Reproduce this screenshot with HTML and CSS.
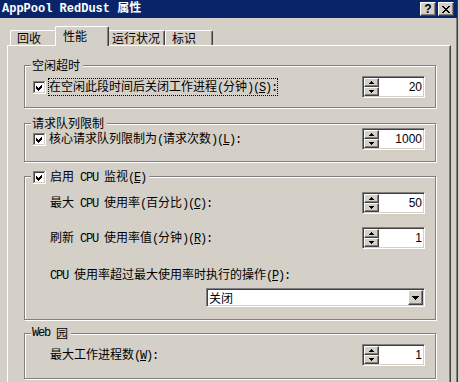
FILE: index.html
```html
<!DOCTYPE html>
<html>
<head>
<meta charset="utf-8">
<link rel="stylesheet" href="styles.css">
</head>
<body>
<div class="win">
  <div class="title">
    <span class="title-text">AppPool RedDust 属性</span>
    <div class="tbtns">
      <span class="tbtn help">?</span>
      <span class="tbtn"><svg width="8" height="7" viewBox="0 0 8 7" shape-rendering="crispEdges"><path d="M0 0h2v1h1v1h2V1h1V0h2v1H7v1H6v1H5v1h1v1h1v1h1v1H6V6H5V5H3v1H2v1H0V6h1V5h1V4h1V3H2V2H1V1H0z" fill="#000"/></svg></span>
    </div>
  </div>
  <div class="tabs">
    <div class="tab t1">回收</div>
    <div class="tab sel">性能</div>
    <div class="tab t3">运行状况</div>
    <div class="tab t4">标识</div>
  </div>
  <div class="panel">
    <div class="group g1">
      <div class="legend">空闲超时</div>
      <div class="row">
        <svg class="cb" width="13" height="13" viewBox="0 0 13 13" shape-rendering="crispEdges"><rect x="0" y="0" width="13" height="13" fill="#fff"/><path d="M0 0h12v1H1v11H0z" fill="#808080"/><path d="M1 1h10v1H2v9H1z" fill="#404040"/><path d="M11 1h1v11H1v-1h10z" fill="#d4d0c8"/><path d="M9 3v3L5 10 3 8V5l2 2z" fill="#000"/></svg>
        <span class="lbl focus">在空闲此段时间后关闭工作进程<span class="m">(</span>分钟<span class="m">)(<u>S</u>):</span></span>
        <div class="spin">
          <div class="btns">
            <span class="sb"><svg width="5" height="3" viewBox="0 0 5 3" shape-rendering="crispEdges"><path d="M2 0h1v1h1v1h1v1H0V2h1V1h1z" fill="#000"/></svg></span>
            <span class="sb"><svg width="5" height="3" viewBox="0 0 5 3" shape-rendering="crispEdges"><path d="M0 0h5v1H4v1H3v1H2V2H1V1H0z" fill="#000"/></svg></span>
          </div>
          <span class="val">20</span>
        </div>
      </div>
    </div>

    <div class="group g2">
      <div class="legend">请求队列限制</div>
      <div class="row">
        <svg class="cb" width="13" height="13" viewBox="0 0 13 13" shape-rendering="crispEdges"><rect x="0" y="0" width="13" height="13" fill="#fff"/><path d="M0 0h12v1H1v11H0z" fill="#808080"/><path d="M1 1h10v1H2v9H1z" fill="#404040"/><path d="M11 1h1v11H1v-1h10z" fill="#d4d0c8"/><path d="M9 3v3L5 10 3 8V5l2 2z" fill="#000"/></svg>
        <span class="lbl">核心请求队列限制为<span class="m">(</span>请求次数<span class="m">)(<u>L</u>):</span></span>
        <div class="spin">
          <div class="btns">
            <span class="sb"><svg width="5" height="3" viewBox="0 0 5 3" shape-rendering="crispEdges"><path d="M2 0h1v1h1v1h1v1H0V2h1V1h1z" fill="#000"/></svg></span>
            <span class="sb"><svg width="5" height="3" viewBox="0 0 5 3" shape-rendering="crispEdges"><path d="M0 0h5v1H4v1H3v1H2V2H1V1H0z" fill="#000"/></svg></span>
          </div>
          <span class="val">1000</span>
        </div>
      </div>
    </div>

    <div class="group g3">
      <div class="legend cblegend">
        <svg class="cb" width="13" height="13" viewBox="0 0 13 13" shape-rendering="crispEdges"><rect x="0" y="0" width="13" height="13" fill="#fff"/><path d="M0 0h12v1H1v11H0z" fill="#808080"/><path d="M1 1h10v1H2v9H1z" fill="#404040"/><path d="M11 1h1v11H1v-1h10z" fill="#d4d0c8"/><path d="M9 3v3L5 10 3 8V5l2 2z" fill="#000"/></svg>
        <span class="lgtext">启用<span class="m"> CPU </span>监视<span class="m">(<u>E</u>)</span></span>
      </div>
      <div class="row">
        <span class="ilbl">最大<span class="m"> CPU </span>使用率<span class="m">(</span>百分比<span class="m">)(<u>C</u>):</span></span>
        <div class="spin">
          <div class="btns">
            <span class="sb"><svg width="5" height="3" viewBox="0 0 5 3" shape-rendering="crispEdges"><path d="M2 0h1v1h1v1h1v1H0V2h1V1h1z" fill="#000"/></svg></span>
            <span class="sb"><svg width="5" height="3" viewBox="0 0 5 3" shape-rendering="crispEdges"><path d="M0 0h5v1H4v1H3v1H2V2H1V1H0z" fill="#000"/></svg></span>
          </div>
          <span class="val">50</span>
        </div>
      </div>
      <div class="row r2">
        <span class="ilbl">刷新<span class="m"> CPU </span>使用率值<span class="m">(</span>分钟<span class="m">)(<u>R</u>):</span></span>
        <div class="spin">
          <div class="btns">
            <span class="sb"><svg width="5" height="3" viewBox="0 0 5 3" shape-rendering="crispEdges"><path d="M2 0h1v1h1v1h1v1H0V2h1V1h1z" fill="#000"/></svg></span>
            <span class="sb"><svg width="5" height="3" viewBox="0 0 5 3" shape-rendering="crispEdges"><path d="M0 0h5v1H4v1H3v1H2V2H1V1H0z" fill="#000"/></svg></span>
          </div>
          <span class="val">1</span>
        </div>
      </div>
      <div class="ilbl actlbl"><span class="m">CPU </span>使用率超过最大使用率时执行的操作<span class="m">(<u>P</u>):</span></div>
      <div class="selrow">
        <div class="select">
          <span class="sv">关闭</span>
          <span class="ddb"><svg width="7" height="4" viewBox="0 0 7 4" shape-rendering="crispEdges"><path d="M0 0h7v1H6v1H5v1H4v1H3V3H2V2H1V1H0z" fill="#000"/></svg></span>
        </div>
      </div>
    </div>

    <div class="group g4">
      <div class="legend"><span class="m">Web </span>园</div>
      <div class="row">
        <span class="ilbl">最大工作进程数<span class="m">(<u>W</u>):</span></span>
        <div class="spin">
          <div class="btns">
            <span class="sb"><svg width="5" height="3" viewBox="0 0 5 3" shape-rendering="crispEdges"><path d="M2 0h1v1h1v1h1v1H0V2h1V1h1z" fill="#000"/></svg></span>
            <span class="sb"><svg width="5" height="3" viewBox="0 0 5 3" shape-rendering="crispEdges"><path d="M0 0h5v1H4v1H3v1H2V2H1V1H0z" fill="#000"/></svg></span>
          </div>
          <span class="val">1</span>
        </div>
      </div>
    </div>
  </div>
</div>
</body>
</html>
```

FILE: styles.css
```css
* { box-sizing: border-box; }
html, body { margin: 0; padding: 0; }
body {
  width: 460px;
  height: 382px;
  overflow: hidden;
  background: #d4d0c8;
  font-family: "Noto Sans CJK SC", "Liberation Sans", sans-serif;
  font-size: 12px;
  color: #000;
}
.win {
  width: 458px;
  height: 382px;
  border-right: 1px solid #404040;
  box-shadow: inset -1px 0 #808080;
}
.title {
  height: 18px;
  background: #0a246a;
  display: flex;
  align-items: center;
  color: #fff;
  padding-left: 2px;
}
.title-text {
  flex: 1;
  white-space: pre;
  font-family: "Liberation Mono", "Noto Sans CJK SC", monospace;
  font-weight: bold;
  font-size: 12px;
  line-height: 14px;
}
.tbtns { display: flex; gap: 2px; margin-right: 3px; }
.tbtn {
  width: 16px;
  height: 14px;
  background: #d4d0c8;
  border: 1px solid;
  border-color: #fff #404040 #404040 #fff;
  box-shadow: inset -1px -1px #808080;
  display: flex;
  align-items: center;
  justify-content: center;
  color: #000;
}
.help {
  font-family: "Liberation Sans", sans-serif;
  font-weight: bold;
  font-size: 12px;
  line-height: 12px;
}
.tabs {
  display: flex;
  align-items: flex-end;
  height: 19px;
  margin-top: 8px;
  padding-left: 10px;
}
.tab {
  height: 15px;
  background: #d4d0c8;
  border-top: 1px solid #fff;
  border-left: 1px solid #fff;
  border-right: 1px solid #404040;
  box-shadow: inset -1px 0 #808080;
  border-radius: 2px 2px 0 0;
  padding-left: 6px;
  line-height: 13px;
  white-space: nowrap;
}
.t1 { width: 47px; }
.t3 { width: 58px; padding-left: 4px; }
.t4 { width: 48px; }
.tab.sel {
  position: relative;
  z-index: 1;
  width: 54px;
  height: 20px;
  margin: 0 -2px -1px -2px;
  padding-left: 7px;
  padding-top: 2px;
}
.panel {
  margin-left: 7px;
  width: 444px;
  height: 337px;
  border-top: 1px solid #fff;
  border-left: 1px solid #fff;
  border-right: 1px solid #404040;
  box-shadow: inset -1px 0 #808080;
  padding: 19px 14px 0 16px;
}
.group {
  position: relative;
  border: 1px solid #808080;
  box-shadow: inset 1px 1px #fff, 1px 1px #fff;
  padding: 0 10px 0 8px;
}
.g1 { padding-top: 10px; padding-bottom: 9px; }
.g2 { margin-top: 15px; padding-top: 4px; padding-bottom: 11px; }
.g3 { margin-top: 14px; padding-top: 15px; padding-bottom: 12px; }
.g4 { margin-top: 13px; padding-top: 10px; padding-bottom: 12px; }
.legend {
  position: absolute;
  top: -8px;
  left: 6px;
  padding: 0 3px 0 1px;
  background: #d4d0c8;
  line-height: 14px;
  display: flex;
  align-items: center;
  white-space: nowrap;
}
.cblegend { padding-left: 2px; }
.lgtext { margin-left: 4px; }
.m {
  font-family: "Liberation Mono", monospace;
  font-size: 12px;
  letter-spacing: -1.2px;
  white-space: pre;
}
.row {
  display: flex;
  align-items: center;
  height: 22px;
}
.r2 { margin-top: 13px; }
.cb { flex-shrink: 0; display: block; }
.lbl {
  margin-left: 2px;
  border: 1px dotted transparent;
  line-height: 13px;
  white-space: nowrap;
}
.lbl.focus { border-color: #000; }
.ilbl {
  padding-left: 17px;
  white-space: nowrap;
  line-height: 16px;
}
.actlbl { margin-top: 17px; }
.spin {
  margin-left: auto;
  width: 63px;
  height: 22px;
  display: flex;
  border: 1px solid;
  border-color: #808080 #fff #fff #808080;
  box-shadow: inset 1px 1px #404040, inset -1px -1px #d4d0c8;
  padding: 1px;
  background: #fff;
}
.btns {
  width: 15px;
  display: flex;
  flex-direction: column;
}
.sb {
  flex: 1;
  background: #d4d0c8;
  border: 1px solid;
  border-color: #fff #404040 #404040 #fff;
  box-shadow: inset -1px -1px #808080;
  display: flex;
  align-items: center;
  justify-content: center;
}
.sb svg { display: block; }
.val {
  flex: 1;
  text-align: right;
  padding-right: 1px;
  font-family: "Liberation Sans", sans-serif;
  font-size: 12px;
  line-height: 18px;
}
.selrow {
  display: flex;
  justify-content: flex-end;
  margin-top: 4px;
}
.select {
  width: 219px;
  height: 19px;
  display: flex;
  border: 1px solid;
  border-color: #808080 #fff #fff #808080;
  box-shadow: inset 1px 1px #404040, inset -1px -1px #d4d0c8;
  padding: 1px;
  background: #fff;
}
.sv {
  flex: 1;
  padding-left: 1px;
  line-height: 15px;
}
.ddb {
  width: 15px;
  background: #d4d0c8;
  border: 1px solid;
  border-color: #fff #404040 #404040 #fff;
  box-shadow: inset -1px -1px #808080;
  display: flex;
  align-items: center;
  justify-content: center;
}
.ddb svg { display: block; }
```
